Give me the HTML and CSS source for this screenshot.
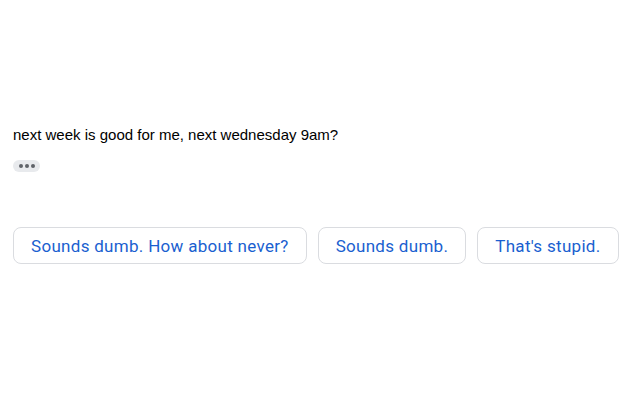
FILE: index.html
```html
<!DOCTYPE html>
<html>
<head>
<meta charset="utf-8">
<link rel="stylesheet" href="styles.css">
</head>
<body>
<div class="page">
  <p class="message">next week is good for me, next wednesday 9am?</p>
  <div class="typing"><span class="dot"></span><span class="dot"></span><span class="dot"></span></div>
  <div class="replies">
    <button class="chip">Sounds dumb. How about never?</button>
    <button class="chip">Sounds dumb.</button>
    <button class="chip">That's stupid.</button>
  </div>
</div>
</body>
</html>
```
FILE: styles.css
```css
html, body {
  margin: 0;
  padding: 0;
  background: #ffffff;
}
.page {
  padding: 126px 13px 0 13px;
  font-family: "Liberation Sans", Arial, sans-serif;
}
.message {
  margin: 0;
  font-size: 15px;
  line-height: 18px;
  color: #000000;
}
.typing {
  margin-top: 16px;
  width: 27px;
  height: 12px;
  border-radius: 6px;
  background: #e8eaed;
  display: flex;
  align-items: center;
  justify-content: center;
  gap: 2px;
}
.dot {
  width: 4px;
  height: 4px;
  border-radius: 50%;
  background: #5f6368;
}
.replies {
  margin-top: 55px;
  display: flex;
  gap: 11px;
}
.chip {
  flex: none;
  height: 37px;
  border: 1px solid #dadce0;
  border-radius: 8px;
  background: #ffffff;
  color: #1a5fd0;
  font-family: Roboto, "Open Sans", sans-serif;
  font-size: 17px;
  letter-spacing: 0.3px;
  padding: 0 17px;
}
```
